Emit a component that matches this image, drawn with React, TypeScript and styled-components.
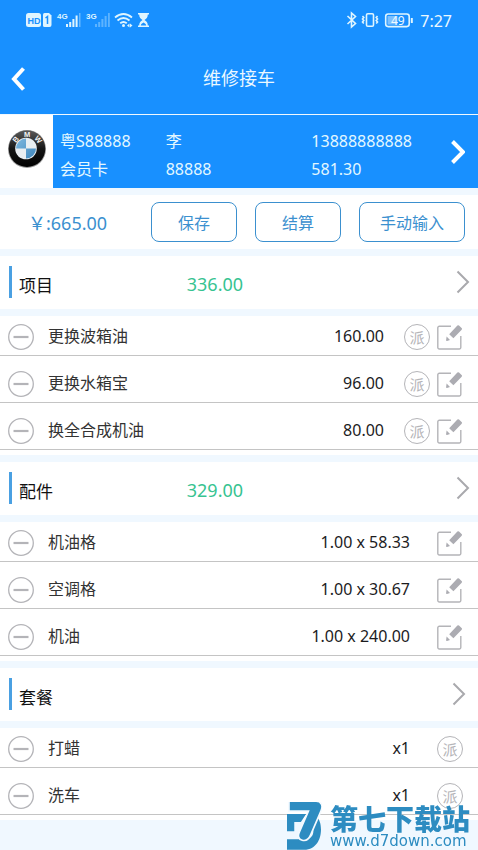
import React from "react";
import styled, { createGlobalStyle } from "styled-components";

const blue = "#1890ff";
const pale = "#f0f8ff";
const outline = "#3b90cf";
const grey = "#b4b4b8";

const GlobalStyle = createGlobalStyle`
  *, *::before, *::after { box-sizing: border-box; }
  body {
    margin: 0;
    background: ${pale};
    color: #1c1c1e;
    font-family: "Noto Sans", "Noto Sans CJK SC", sans-serif;
    font-size: 16px;
    line-height: 24px;
  }
  button {
    font: inherit;
    color: inherit;
    background: none;
    border: 0;
    padding: 0;
    cursor: pointer;
  }
  ul, h1, h2, p { margin: 0; padding: 0; font-weight: 400; }
  ul { list-style: none; }
  svg { display: block; flex: none; }
`;

const Page = styled.div`
  min-height: 100vh;
  overflow: hidden;
`;

const Header = styled.header`
  background: ${blue};
  color: #ebf8ff;
`;

const StatusBar = styled.div`
  display: flex;
  justify-content: space-between;
  align-items: center;
  height: 42px;
  padding: 0 26px 2px 26px;
`;

const StatusGroup = styled.div`
  display: flex;
  align-items: center;
  gap: 6px;
`;

const Clock = styled.span`
  padding-top: 2px;
  font-size: 16px;
`;

const TitleBar = styled.div`
  display: grid;
  grid-template-columns: 48px 1fr 48px;
  align-items: center;
  height: 72px;
`;

const Title = styled.h1`
  font-size: 18px;
  text-align: center;
`;

const BackButton = styled.button`
  padding: 2px 11px 0;
`;

const Customer = styled.section`
  display: flex;
  margin-top: 1px;
  margin-bottom: 7px;
`;

const Brand = styled.div`
  display: flex;
  justify-content: center;
  width: 53px;
  padding-top: 14px;
  background: #fff;
`;

const CustomerLink = styled.button`
  flex: 1;
  display: flex;
  align-items: center;
  gap: 8px;
  padding: 0 13px 0 7px;
  background: ${blue};
  color: #e3f8ff;
  text-align: left;
`;

const CustomerGrid = styled.span`
  flex: 1;
  display: grid;
  grid-template-columns: 106fr 146fr 132fr;
  row-gap: 4px;
  padding: 14px 0 7px;
`;

const Toolbar = styled.section`
  display: flex;
  align-items: center;
  gap: 18px;
  padding: 7px 13px 7px 28px;
  background: #fff;
  color: ${outline};
`;

const Total = styled.p`
  flex: 1;
  padding-top: 2px;
  font-size: 18px;
  white-space: nowrap;
`;

const ActionButton = styled.button<{ $wide?: boolean }>`
  width: ${(p) => (p.$wide ? 106 : 86)}px;
  height: 40px;
  padding-top: 2px;
  border: 1px solid ${outline};
  border-radius: 8px;
`;

const Section = styled.section`
  padding-top: 7px;
`;

const SectionHead = styled.header<{ $inset?: boolean }>`
  display: grid;
  grid-template-columns: 35fr 53fr 14px;
  align-items: center;
  height: 53px;
  margin-bottom: 7px;
  padding: 0 ${(p) => (p.$inset ? 12 : 8)}px 1px 9px;
  background: #fff;
`;

const SectionTitle = styled.h2`
  display: flex;
  align-items: center;
  height: 32px;
  padding: 8px 0 0 7px;
  border-left: 3px solid #4aa0e2;
  color: #111;
  font-size: 17px;
`;

const Sum = styled.span`
  padding-top: 3px;
  color: #37c391;
  font-size: 18px;
`;

const List = styled.ul`
  padding-bottom: 5px;
  background: #fff;
`;

const Row = styled.li`
  display: flex;
  align-items: center;
  padding: 2px 15px 0 8px;
  height: 40px;
  border-bottom: 1px solid #c4c4c4;

  & + & {
    height: 47px;
    padding-top: 9px;
  }
`;

const ItemName = styled.span`
  flex: 1;
  padding: 0 0 2px 14px;
  color: #333;
`;

const Amount = styled.span<{ $far?: boolean }>`
  padding-bottom: 1px;
  margin-right: ${(p) => (p.$far ? 27 : 20)}px;
`;

const Actions = styled.span`
  display: flex;
  gap: 7px;
`;

const AssignButton = styled.button`
  width: 26px;
  height: 26px;
  border: 1px solid ${grey};
  border-radius: 50%;
  color: ${grey};
  font-size: 15px;
  line-height: 24px;
`;

const Watermark = styled.aside`
  position: fixed;
  right: 8px;
  bottom: 0;
  display: flex;
  align-items: flex-end;
  gap: 8px;
  color: #2d8cc1;
  pointer-events: none;
`;

const WatermarkName = styled.p`
  font-family: "Noto Sans CJK SC", sans-serif;
  font-size: 28px;
  font-weight: 900;
  line-height: 28px;
`;

const WatermarkUrl = styled.p`
  font-family: "DejaVu Sans", sans-serif;
  font-size: 15px;
  line-height: 18px;
`;

type ChevronProps = { left?: boolean; color: string; weight: number };

const Chevron = ({ left, color, weight }: ChevronProps) => (
  <svg width="14" height="26" viewBox="0 0 14 26" fill="none" stroke={color} strokeWidth={weight} aria-hidden="true">
    <path d={left ? "M12.5 2.5 3 13l9.500 10.500" : "M1.500 2.500 12 13 1.500 23.500"} />
  </svg>
);

const MinusIcon = () => (
  <svg width="26" height="26" viewBox="0 0 26 26" fill="none" stroke={grey} aria-hidden="true">
    <circle cx="13" cy="13" r="12.300" strokeWidth="1.300" />
    <path d="M5.500 13h15" strokeWidth="2.200" />
  </svg>
);

const EditIcon = () => (
  <svg width="26" height="26" viewBox="0 0 26 26" aria-hidden="true">
    <path d="M14 2.200H2.300a1.500 1.500 0 0 0-1.500 1.500v19.800a1.500 1.500 0 0 0 1.500 1.500h20a1.500 1.500 0 0 0 1.500-1.500V12" fill="none" stroke={grey} strokeWidth="1.400" />
    <path d="m12.200 10.200 8.200-8.600a1.200 1.200 0 0 1 1.600-.1l2.600 2.500a1.200 1.200 0 0 1 .1 1.700l-8.300 8.500zM9.600 12.600l3.400 3.400-3 1a.8.800 0 0 1-.9-.9z" fill="#acacb2" />
  </svg>
);

const NetworkIcons = () => (
  <svg width="125" height="18" viewBox="0 0 125 18" fill="#dff5ff" aria-label="HD, 4G, 3G, Wi-Fi" role="img">
    <rect x="0" y="2" width="15" height="14" rx="2.500" />
    <text x="1.500" y="12.500" fontSize="9" fontWeight="600" fill={blue} fontFamily="Liberation Sans, sans-serif">HD</text>
    <path d="M18.500 2h4.500l2.500 2.500V14a2 2 0 0 1-2 2h-5a1.500 1.500 0 0 1-1.500-1.500v-11A1.500 1.500 0 0 1 18.500 2z" />
    <path d="M19.500 7 21.500 5.500V13" fill="none" stroke={blue} strokeWidth="1.500" />
    <g fontSize="8" fontWeight="700" fontFamily="Liberation Sans Narrow, Liberation Sans, sans-serif">
      <text x="31" y="8">4G</text>
      <text x="60" y="8">3G</text>
    </g>
    <path d="M40 13h2v3h-2zM43.200 11h2v5h-2zM46.400 8h2v8h-2zM49.600 4.500h2V16h-2z" />
    <path d="M53 2h1.500v14H53z" opacity=".4" />
    <path d="M69 13h2v3h-2zM72.200 11h2v5h-2zM75.400 8h2v8h-2zM78.600 5h2v11h-2zM82 2h1.800v14H82z" opacity=".35" />
    <g fill="none" stroke="#dff5ff" strokeWidth="1.800">
      <path d="M89 6.500Q97.500-.5 106 6.500M91.500 9.500q6-5 12 0M94.200 12.300q3.300-2.600 6.600 0" />
    </g>
    <circle cx="97.500" cy="14.600" r="1.500" />
    <path d="m101 14.500 2.500-2v4zm5.500 0-2.500-2v4z" />
    <path d="M112 2h11v1.500h-1.200c0 3-1.500 4.200-3.300 5.500 1.800 1.300 3.300 2.500 3.300 5.500h1.200V16h-11v-1.500h1.200c0-3 1.500-4.200 3.300-5.500-1.800-1.300-3.300-2.500-3.300-5.500H112z" />
    <path d="M114.800 14.500c.2-1.500 1.200-2 2.700-3 1.500 1 2.500 1.500 2.700 3z" fill={blue} />
  </svg>
);

const DeviceIcons = () => (
  <svg width="68" height="18" viewBox="0 0 68 18" fill="none" stroke="#dff5ff" strokeWidth="1.600" aria-label="49%" role="img">
    <path d="m1.500 5 8 7.500L5.500 16V2l4 3.500L1.500 13" />
    <rect x="20.500" y="2.700" width="7" height="12.600" rx="1.300" />
    <path d="M16.500 5l1.300 1.500L16.500 8l1.300 1.500L16.500 11l1.300 1.500M31.500 5l-1.300 1.500L31.500 8l-1.300 1.500L31.500 11l-1.300 1.500" />
    <rect x="39.700" y="3" width="23.500" height="12.600" rx="2.500" />
    <path d="M65.800 7v5" strokeWidth="2" />
    <rect x="41.500" y="5" width="10" height="8.600" fill="#7cc0ff" stroke="none" />
    <text x="45" y="13.500" fontSize="12" fill="#effaff" stroke="none" fontFamily="Noto Sans, sans-serif">49</text>
  </svg>
);

const BrandLogo = () => (
  <svg width="40" height="40" viewBox="0 0 40 40" role="img" aria-label="BMW">
    <defs>
      <linearGradient id="ring" x1="0" y1="0" x2="0" y2="1">
        <stop offset="0" stopColor="#5a5a5a" />
        <stop offset=".5" stopColor="#161616" />
        <stop offset="1" stopColor="#000" />
      </linearGradient>
      <linearGradient id="sky" x1="0" y1="0" x2="1" y2="1">
        <stop offset="0" stopColor="#7fb8df" />
        <stop offset="1" stopColor="#3f87bd" />
      </linearGradient>
    </defs>
    <circle cx="20" cy="20" r="19" fill="#999" />
    <circle cx="20" cy="19.700" r="18.300" fill="url(#ring)" />
    <circle cx="19" cy="19.500" r="10.800" fill="#e9eef2" />
    <path d="M19 19.500V9.500a10 10 0 0 0-10 10zM19 19.500v10a10 10 0 0 0 10-10z" fill="url(#sky)" />
    <g fill="#f2f2f2" fontFamily="Liberation Sans, sans-serif" fontWeight="700" fontSize="7.500" textAnchor="middle">
      <text transform="rotate(-50 20 20)" x="20" y="8">B</text>
      <text x="20" y="8">M</text>
      <text transform="rotate(50 20 20)" x="20" y="8">W</text>
    </g>
  </svg>
);

const WatermarkLogo = () => (
  <svg width="35" height="48" viewBox="0 0 106 144" aria-hidden="true">
    <path fill="currentColor" d="M0 36H58L42 60H22V88H0zM90 44C112 62 110 144 52 144H0V112H60C82 108 84 84 74 72z" />
    <path fill="currentColor" stroke="#f4faff" strokeWidth="5" d="M6-3H88C104-3 110 10 103 26L72 98c-6 14-16 20-26 17-12-3-14-14-8-26L65 27H6z" />
  </svg>
);

type Item = { name: string; amount: string };
type Group = { title: string; sum?: string; assign?: boolean; edit?: boolean; items: Item[] };

const groups: Group[] = [
  {
    title: "项目",
    sum: "336.00",
    assign: true,
    edit: true,
    items: [
      { name: "更换波箱油", amount: "160.00" },
      { name: "更换水箱宝", amount: "96.00" },
      { name: "换全合成机油", amount: "80.00" },
    ],
  },
  {
    title: "配件",
    sum: "329.00",
    edit: true,
    items: [
      { name: "机油格", amount: "1.00 x 58.33" },
      { name: "空调格", amount: "1.00 x 30.67" },
      { name: "机油", amount: "1.00 x 240.00" },
    ],
  },
  {
    title: "套餐",
    assign: true,
    items: [
      { name: "打蜡", amount: "x1" },
      { name: "洗车", amount: "x1" },
    ],
  },
];

const GroupSection = ({ title, sum, assign, edit, items }: Group) => (
  <Section>
    <SectionHead $inset={!sum}>
      <SectionTitle>{title}</SectionTitle>
      <Sum>{sum}</Sum>
      <button aria-label={`打开${title}`}>
        <Chevron color="#a9a9ad" weight={2} />
      </button>
    </SectionHead>
    <List>
      {items.map((item) => (
        <Row key={item.name}>
          <button aria-label={`删除${item.name}`}>
            <MinusIcon />
          </button>
          <ItemName>{item.name}</ItemName>
          <Amount $far={!(assign && edit)}>{item.amount}</Amount>
          <Actions>
            {assign && <AssignButton>派</AssignButton>}
            {edit && (
              <button aria-label={`编辑${item.name}`}>
                <EditIcon />
              </button>
            )}
          </Actions>
        </Row>
      ))}
    </List>
  </Section>
);

export default function App() {
  return (
    <Page>
      <GlobalStyle />
      <Header>
        <StatusBar>
          <NetworkIcons />
          <StatusGroup>
            <DeviceIcons />
            <Clock>7:27</Clock>
          </StatusGroup>
        </StatusBar>
        <TitleBar>
          <BackButton aria-label="返回">
            <Chevron left color="#fff" weight={4} />
          </BackButton>
          <Title>维修接车</Title>
        </TitleBar>
      </Header>
      <main>
        <Customer>
          <Brand>
            <BrandLogo />
          </Brand>
          <CustomerLink>
            <CustomerGrid>
              <span>粤S88888</span>
              <span>李</span>
              <span>13888888888</span>
              <span>会员卡</span>
              <span>88888</span>
              <span>581.30</span>
            </CustomerGrid>
            <Chevron color="#fff" weight={4} />
          </CustomerLink>
        </Customer>
        <Toolbar>
          <Total>￥:665.00</Total>
          <ActionButton>保存</ActionButton>
          <ActionButton>结算</ActionButton>
          <ActionButton $wide>手动输入</ActionButton>
        </Toolbar>
        {groups.map((group) => (
          <GroupSection key={group.title} {...group} />
        ))}
      </main>
      <Watermark>
        <WatermarkLogo />
        <div>
          <WatermarkName>第七下载站</WatermarkName>
          <WatermarkUrl>www.d7down.com</WatermarkUrl>
        </div>
      </Watermark>
    </Page>
  );
}
